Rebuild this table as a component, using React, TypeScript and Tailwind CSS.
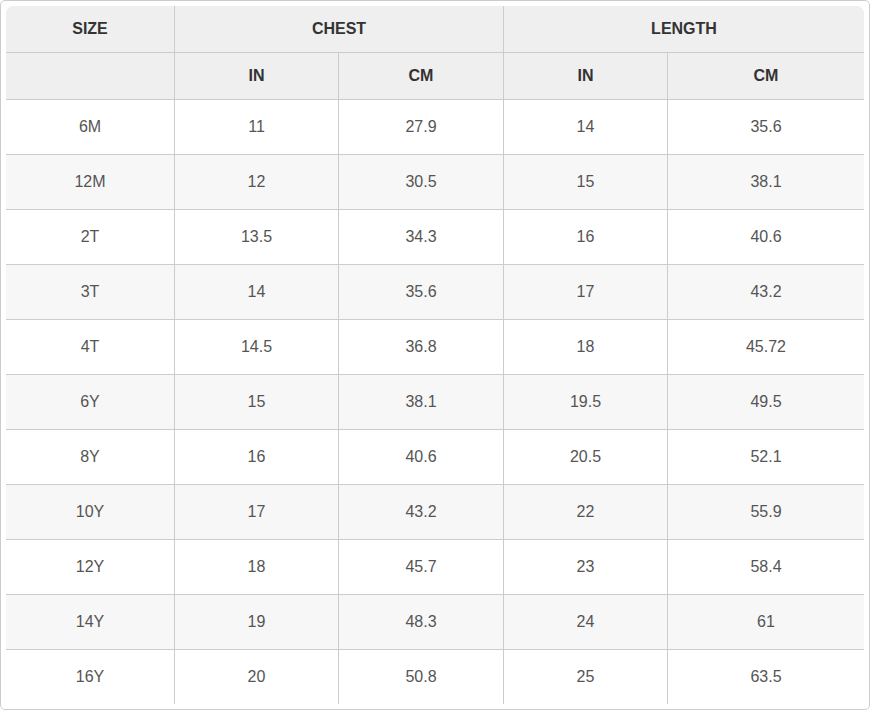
const rows = [
  ['6M', '11', '27.9', '14', '35.6'],
  ['12M', '12', '30.5', '15', '38.1'],
  ['2T', '13.5', '34.3', '16', '40.6'],
  ['3T', '14', '35.6', '17', '43.2'],
  ['4T', '14.5', '36.8', '18', '45.72'],
  ['6Y', '15', '38.1', '19.5', '49.5'],
  ['8Y', '16', '40.6', '20.5', '52.1'],
  ['10Y', '17', '43.2', '22', '55.9'],
  ['12Y', '18', '45.7', '23', '58.4'],
  ['14Y', '19', '48.3', '24', '61'],
  ['16Y', '20', '50.8', '25', '63.5'],
]

// column widths include the 1px right rule
const widths = ['w-[169px]', 'w-[164px]', 'w-[165px]', 'w-[164px]', 'w-[196px]']

export default function App() {
  return (
    <div className="w-[870px] h-[710px] bg-white p-[5px] border border-[#cccccc] rounded-[5px] font-['Liberation_Sans',Arial,sans-serif]">
      <div className="w-[858px] rounded-t-[7px] overflow-hidden">
        {/* header row 1 */}
        <div className="flex h-[47px] bg-[#efefef] border-b border-[#cccccc] text-[16px] font-bold text-[#333333]">
          <div className="w-[169px] border-r border-[#cccccc] flex items-center justify-center">SIZE</div>
          <div className="w-[329px] border-r border-[#cccccc] flex items-center justify-center">CHEST</div>
          <div className="w-[360px] flex items-center justify-center">LENGTH</div>
        </div>
        {/* header row 2 */}
        <div className="flex h-[47px] bg-[#efefef] border-b border-[#cccccc] text-[16px] font-bold text-[#333333]">
          {['', 'IN', 'CM', 'IN', 'CM'].map((t, i) => (
            <div
              key={i}
              className={`${widths[i]} flex items-center justify-center ${i < 4 ? 'border-r border-[#cccccc]' : ''}`}
            >
              {t}
            </div>
          ))}
        </div>
        {rows.map((r, ri) => {
          const last = ri === rows.length - 1
          return (
            <div
              key={ri}
              className={`flex text-[16px] text-[#555555] ${ri % 2 ? 'bg-[#f7f7f7]' : 'bg-white'} ${
                last ? 'h-[54px]' : 'h-[55px] border-b border-[#cccccc]'
              }`}
            >
              {r.map((c, ci) => (
                <div
                  key={ci}
                  className={`${widths[ci]} flex items-center justify-center ${ci < 4 ? 'border-r border-[#cccccc]' : ''}`}
                >
                  {c}
                </div>
              ))}
            </div>
          )
        })}
      </div>
    </div>
  )
}
